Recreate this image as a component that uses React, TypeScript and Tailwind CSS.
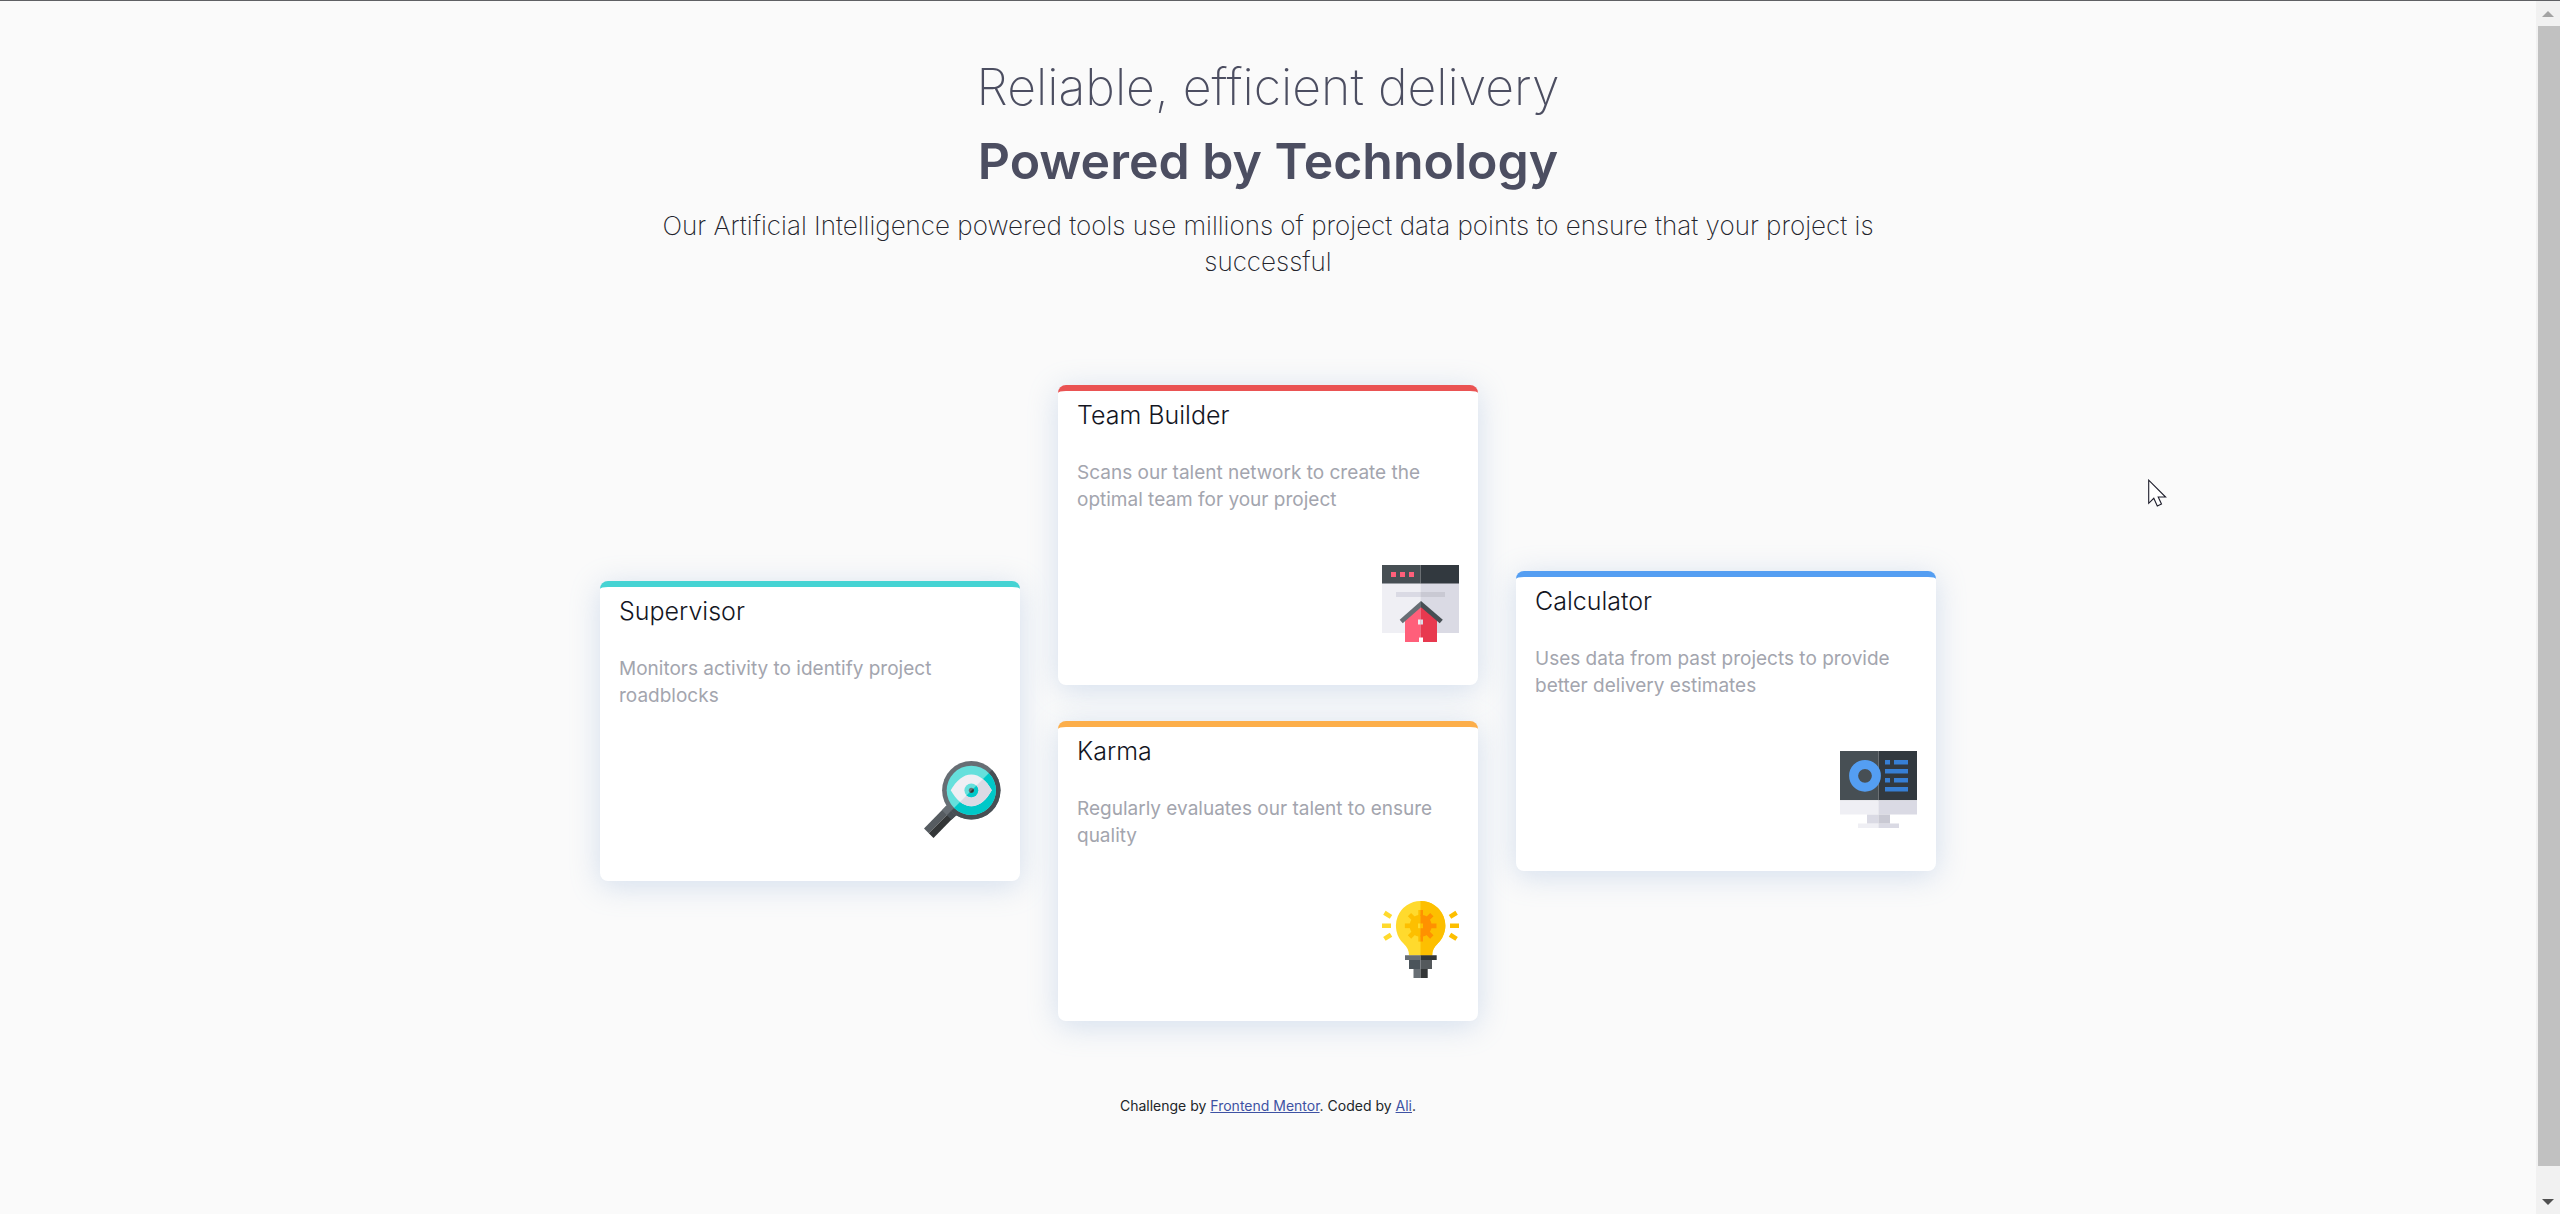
import React, { type ReactNode } from "react";

function SupervisorIcon() {
  return (
    <svg viewBox="0 0 77 77" className="size-[77px]" aria-hidden="true">
      <defs>
        <clipPath id="lensLower">
          <path d="M77 0V77H0Z" />
        </clipPath>
      </defs>
      <path d="M22 45L0 67.5L4.75 72.25L27 50Z" fill="#565c61" />
      <path d="M31.500 54.500L9.500 77L4.750 72.250L27 50Z" fill="#333637" />
      <path d="M24 43L18 49.200L22.800 54.200L29 48Z" fill="#676e74" />
      <path d="M34 53L27.500 58.800L22.800 54.200L29 48Z" fill="#474f54" />
      <circle cx="47.300" cy="29.300" r="29.200" fill="#676e74" />
      <circle cx="47.300" cy="29.300" r="29.200" fill="#474f54" clipPath="url(#lensLower)" />
      <circle cx="47.300" cy="29.300" r="24.600" fill="#65e0dc" />
      <circle cx="47.300" cy="29.300" r="24.600" fill="#00c8c8" clipPath="url(#lensLower)" />
      <path d="M26.700 29.300C32.600 19.500 39.100 13.600 47.300 13.600S62.100 19.500 67.800 29.300C62.100 39.500 55.600 45.200 47.300 45.200S32.600 39.500 26.700 29.300Z" fill="#efeff4" />
      <path d="M26.700 29.300C32.600 19.500 39.100 13.600 47.300 13.600S62.100 19.500 67.800 29.300C62.100 39.500 55.600 45.200 47.300 45.200S32.600 39.500 26.700 29.300Z" fill="#dadae4" clipPath="url(#lensLower)" />
      <circle cx="47.300" cy="29.300" r="6.900" fill="#65e0dc" />
      <circle cx="47.300" cy="29.300" r="6.900" fill="#00c8c8" clipPath="url(#lensLower)" />
      <circle cx="47.300" cy="29.300" r="2.500" fill="#676e74" />
      <circle cx="47.300" cy="29.300" r="2.500" fill="#333637" clipPath="url(#lensLower)" />
    </svg>
  );
}

function TeamBuilderIcon() {
  return (
    <svg viewBox="0 0 77 77" className="size-[77px]" aria-hidden="true">
      <path d="M0 18H38.500V68H0Z" fill="#efeff4" />
      <path d="M38.500 18H77V68H38.500Z" fill="#dadae4" />
      <path d="M0 0H38.500V18.500H0Z" fill="#474f54" />
      <path d="M38.500 0H77V18.500H38.500Z" fill="#32393f" />
      <path d="M9 7h5v5h-5zM18 7h5v5h-5zM27 7h5v5h-5z" fill="#ff5f7a" />
      <path d="M14 27H38.500V32H14Z" fill="#dadae4" />
      <path d="M38.500 27H63V32H38.500Z" fill="#c9c9d3" />
      <path d="M23 54L38.500 40V77H23Z" fill="#ff5f7a" />
      <path d="M55 54L38.500 40V77H55Z" fill="#e8394f" />
      <path d="M39 36L17.700 54.700L20.700 58.200L39 42.300Z" fill="#676e74" />
      <path d="M39 36L60.800 54.700L57.700 58.200L39 42.300Z" fill="#474f54" />
      <path d="M36 54.500h2.500v5H36z" fill="#efeff4" />
      <path d="M38.500 54.500h2.500v5h-2.500z" fill="#dadae4" />
      <path d="M37 72.500h4V77h-4z" fill="#fff" />
    </svg>
  );
}

function KarmaIcon() {
  const tooth = "M36.300 9h4.700v6h-4.700z";
  const bulb = "M38.600 0A24.700 24.700 0 0 0 21.500 42.500C25.300 46 27 49.500 27 54.500H50.200C50.200 49.500 52 46 55.800 42.500A24.700 24.700 0 0 0 38.600 0Z";
  const angles = [0, 45, 90, 135, 180, 225, 270, 315];
  const gear = (
    <>
      <circle cx="38.650" cy="24.800" r="11" />
      {angles.map((a) => (
        <path key={a} d={tooth} transform={`rotate(${a} 38.650 24.800)`} />
      ))}
    </>
  );
  return (
    <svg viewBox="0 0 77 77" className="size-[77px]" aria-hidden="true">
      <defs>
        <clipPath id="bulbRight">
          <path d="M38.500 0H77V77H38.500Z" />
        </clipPath>
      </defs>
      <path d={bulb} fill="#ffda2d" />
      <path d={bulb} fill="#fdbf00" clipPath="url(#bulbRight)" />
      <g fill="#fdbf00">{gear}</g>
      <g fill="#ff9100" clipPath="url(#bulbRight)">{gear}</g>
      <path d="M36 22.500h2.500v4.700H36z" fill="#ffda2d" />
      <path d="M38.500 22.500h2.500v4.700h-2.500z" fill="#fdbf00" />
      <g strokeWidth="4.600" fill="none">
        <path d="M0 24.800H9M2.400 11.700L9 15.900M2.400 37.900L9 33.700" stroke="#ffda2d" />
        <path d="M77 24.800H68M74.600 11.700L68 15.900M74.600 37.900L68 33.700" stroke="#fdbf00" />
      </g>
      <path d="M23 54.200H38.500V59H23ZM31.500 68H38.500V77H31.500Z" fill="#676e74" />
      <path d="M38.500 54.200H54.700V59H38.500ZM38.500 68H45.700V77H38.500Z" fill="#333637" />
      <path d="M27 59H38.500V68H27Z" fill="#4b545b" />
      <path d="M38.500 59H50V68H38.500Z" fill="#54595c" />
    </svg>
  );
}

function CalculatorIcon() {
  return (
    <svg viewBox="0 0 77 77" className="size-[77px]" aria-hidden="true">
      <path d="M0 0H38.500V49.300H0Z" fill="#474f54" />
      <path d="M38.500 0H77V49.300H38.500Z" fill="#32393f" />
      <path d="M0 49.300H38.500V63.600H0ZM18 72.500H38.500V77H18Z" fill="#efeff4" />
      <path d="M38.500 49.300H77V63.600H38.500ZM38.500 72.500H59V77H38.500Z" fill="#dadae4" />
      <path d="M27 63.600H38.500V72.500H27Z" fill="#dadae4" />
      <path d="M38.500 63.600H50V72.500H38.500Z" fill="#c9c9d3" />
      <circle cx="25" cy="24.800" r="11.400" fill="none" stroke="#549ef2" strokeWidth="9" />
      <path d="M45 9h5v4.600h-5zM54 9h14v4.600h-14zM45 18h23v4.600h-23zM45 27h5v4.600h-5zM54 27h14v4.600h-14zM45 36h23v4.600h-23z" fill="#377fd4" />
    </svg>
  );
}

function Card({ title, text, icon, accent, className = "" }: { title: string; text: string; icon: ReactNode; accent: string; className?: string }) {
  return (
    <article
      className={`flex min-h-[300px] w-[420px] max-w-full flex-col rounded-lg border-t-[6px] bg-white px-[19px] pt-[6px] pb-[43px] shadow-[0_5px_30px_rgba(131,166,210,0.32)] ${accent} ${className}`}
    >
      <h2 className="text-[25px] leading-9 font-light text-[#14161f]">{title}</h2>
      <p className="mt-[26px] text-[19px] leading-[27px] text-[#a3a5ae]">{text}</p>
      <div className="mt-auto self-end">{icon}</div>
    </article>
  );
}

function PageScrollbar() {
  return (
    <aside aria-label="Page scroll" className="flex w-6 shrink-0 flex-col bg-[#f1f1f1]">
      <button aria-label="Scroll up" className="flex h-[25px] shrink-0 items-center justify-center">
        <svg width="12" height="6" viewBox="0 0 12 6"><path d="M6 0L12 6H0Z" fill="#a3a3a3" /></svg>
      </button>
      <div className="flex grow flex-col pl-[2px]">
        <div className="h-[98%] bg-[#c1c1c1]" />
      </div>
      <button aria-label="Scroll down" className="flex h-[25px] shrink-0 items-center justify-center">
        <svg width="12" height="6" viewBox="0 0 12 6"><path d="M0 0H12L6 6Z" fill="#505050" /></svg>
      </button>
    </aside>
  );
}

export default function App() {
  return (
    <div className="relative flex h-screen border-t border-[#5f6064] bg-[#fafafa] font-[Inter,'Open_Sans',sans-serif]">
      <div className="flex min-w-0 grow flex-col items-center overflow-x-hidden overflow-y-auto px-4 pt-[49px] pb-24 [scrollbar-width:none]">
        <header className="flex max-w-[1270px] flex-col items-center text-center">
          <h1 className="text-[50px] leading-[74px] text-[#4c4e61]">
            <span className="block font-extralight">Reliable, efficient delivery</span>
            <span className="block font-semibold">Powered by Technology</span>
          </h1>
          <p className="mt-[10px] text-[26px] leading-9 font-extralight text-[#22232b]">
            Our Artificial Intelligence powered tools use millions of project data points to ensure that your project is
            successful
          </p>
        </header>

        <main className="mt-[105px] flex max-w-full flex-col items-center gap-[38px] lg:flex-row">
          <Card
            className="lg:mt-14"
            accent="border-t-[#45d3d3]"
            title="Supervisor"
            text="Monitors activity to identify project roadblocks"
            icon={<SupervisorIcon />}
          />
          <div className="flex max-w-full flex-col gap-9">
            <Card
              accent="border-t-[#ea5353]"
              title="Team Builder"
              text="Scans our talent network to create the optimal team for your project"
              icon={<TeamBuilderIcon />}
            />
            <Card
              accent="border-t-[#fcae4a]"
              title="Karma"
              text="Regularly evaluates our talent to ensure quality"
              icon={<KarmaIcon />}
            />
          </div>
          <Card
            className="lg:mt-9"
            accent="border-t-[#549ef2]"
            title="Calculator"
            text="Uses data from past projects to provide better delivery estimates"
            icon={<CalculatorIcon />}
          />
        </main>

        <footer className="mt-[75px] text-center text-[14px] leading-5 text-[#212529]">
          Challenge by{" "}
          <a href="#frontend-mentor" className="text-[#3e52a3] underline">Frontend Mentor</a>. Coded by{" "}
          <a href="#ali" className="text-[#3e52a3] underline">Ali</a>.
        </footer>
      </div>

      <PageScrollbar />

      <svg className="pointer-events-none absolute top-[478px] left-[2148px]" width="19" height="28" viewBox="0 0 19 28" aria-hidden="true">
        <path d="M.7 1.200V24.300L5.800 19.300L9.300 27L13.500 25.100L10.200 18H17.600Z" fill="#fff" stroke="#1d1d2b" strokeWidth="1.100" />
      </svg>
    </div>
  );
}
